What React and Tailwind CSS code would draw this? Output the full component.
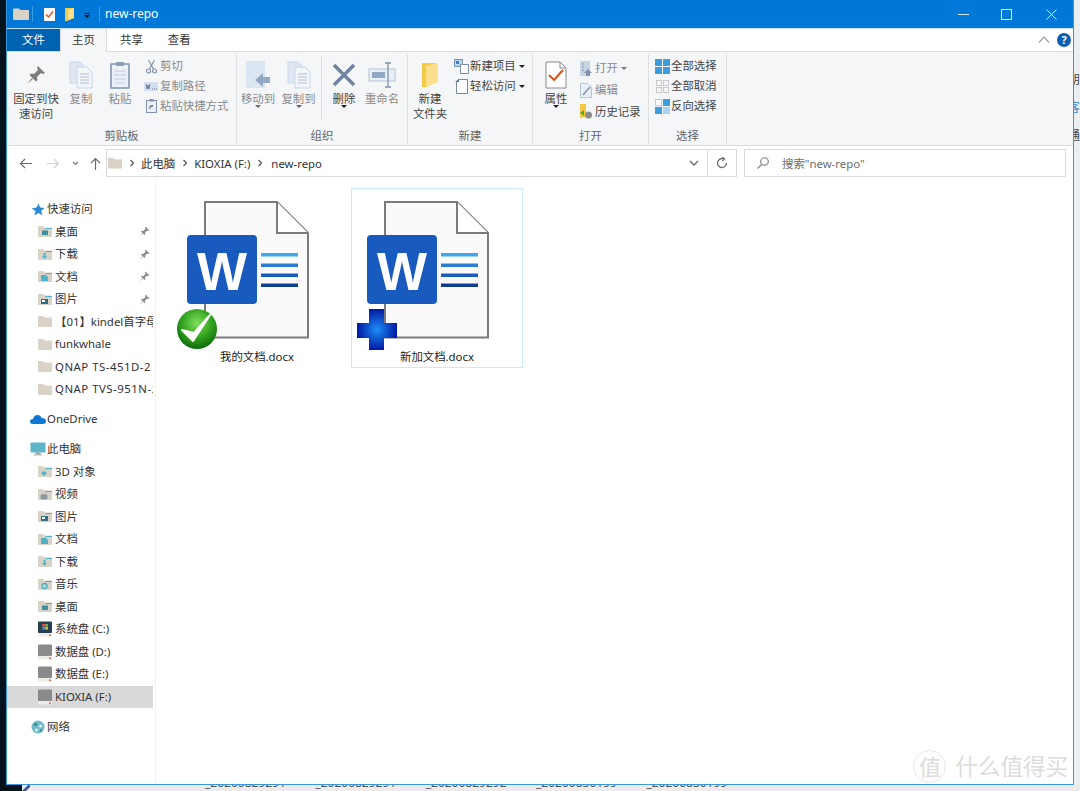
import React from 'react';

const TAN = '#d9d3c7';
const CYAN = '#4fb1c7';

function PinIcon({ size = 11, color = '#8c8c8c' }) {
  return (
    <svg width={size} height={size} viewBox="0 0 20 20">
      <path d="M12 1 L19 8 L17 9 L15 8 L11 12 L11.5 15 L10 16.5 L3.5 10 L5 8.5 L8 9 L12 5 L11 3 Z" fill={color} />
      <path d="M6 13 L1 19 L7 14 Z" fill={color} />
    </svg>
  );
}

function NavFolder({ glyph }) {
  return (
    <svg width="16" height="13" viewBox="0 0 16 13" className="shrink-0">
      <path d="M1 2 Q1 1 2 1 H6 L7.5 2.5 H14 Q15 2.5 15 3.5 V11 Q15 12 14 12 H2 Q1 12 1 11 Z" fill={TAN} />
      {glyph && <path d="M8.5 3 H15 V4 H9.5 L8.5 5 Z" fill={CYAN} />}
      {glyph === 'desk' && <rect x="5" y="5.5" width="6" height="4.5" fill="#3f8f9f" />}
      {glyph === 'down' && <path d="M6.5 5 H8.5 V8 H10 L7.5 11 L5 8 H6.5 Z" fill={CYAN} />}
      {glyph === 'doc' && <path d="M4 5 H9 L11 7 V11 H4 Z" fill={CYAN} />}
      {glyph === 'pic' && <g><rect x="4" y="6" width="7" height="5" fill="#2e6f80" /><rect x="5" y="7" width="3" height="2" fill="#fff" /></g>}
      {glyph === '3d' && <path d="M4 8 L7 6 L10 8 L7 11 Z" fill={CYAN} />}
      {glyph === 'video' && <path d="M4 7 H10 V11 H4 Z M5 6 V7 M7 5.5 V7 M9 6 V7" fill="#8a9aa0" stroke="#8a9aa0" strokeWidth="0.8" />}
      {glyph === 'music' && <circle cx="7.5" cy="8" r="2.5" fill="none" stroke={CYAN} strokeWidth="1.5" />}
    </svg>
  );
}

function Drive({ win }) {
  return (
    <svg width="16" height="16" viewBox="0 0 16 16" className="shrink-0">
      <rect x="1" y="0.5" width="14" height="11.5" rx="1" fill={win ? '#26404f' : '#8a8a8a'} />
      <rect x="1" y="12" width="14" height="3.5" fill="#ebece6" />
      <rect x="12" y="13.5" width="2" height="1.5" fill="#ee6a5f" />
      {win && (
        <g>
          <rect x="5.3" y="3" width="2.6" height="2.6" fill="#e2574c" />
          <rect x="8.3" y="3" width="2.6" height="2.6" fill="#7cbb45" />
          <rect x="5.3" y="6" width="2.6" height="2.6" fill="#3f9be0" />
          <rect x="8.3" y="6" width="2.6" height="2.6" fill="#f4c023" />
        </g>
      )}
    </svg>
  );
}

function NavItem({ icon, label, pinned, selected, wide }) {
  return (
    <div className={`flex items-center h-[22.5px] w-[146px] pl-[30px] whitespace-nowrap overflow-hidden ${selected ? 'bg-[#d9d9d9]' : ''}`}>
      {icon}
      <span className={`ml-[2px] text-[#333] ${wide ? 'tracking-[0.5px]' : ''}`}>{label}</span>
      {pinned && <span className="ml-auto mr-[3px] flex"><PinIcon /></span>}
    </div>
  );
}

function NavRoot({ icon, label }) {
  return (
    <div className="flex items-center h-[22.5px] pl-[22px] whitespace-nowrap">
      <span className="w-[18px] flex justify-center shrink-0">{icon}</span>
      <span className="text-[#333]">{label}</span>
    </div>
  );
}

function Sidebar() {
  return (
    <div className="w-[149px] shrink-0 border-r border-[#f2f2f2] pt-[16px]">
      <NavRoot
        label="快速访问"
        icon={<svg width="14" height="13" viewBox="0 0 14 13"><path d="M7.5 0.5 L9.2 4.6 L13.6 5 L10.2 7.8 L11.3 12.4 L7.5 10 L3.2 12.4 L4.6 8 L0.5 5.4 L5.6 4.6 Z" fill="#2a8ad6" /></svg>}
      />
      <NavItem icon={<NavFolder glyph="desk" />} label="桌面" pinned />
      <NavItem icon={<NavFolder glyph="down" />} label="下载" pinned />
      <NavItem icon={<NavFolder glyph="doc" />} label="文档" pinned />
      <NavItem icon={<NavFolder glyph="pic" />} label="图片" pinned />
      <NavItem icon={<NavFolder />} label="【01】kindel首字母" />
      <NavItem icon={<NavFolder />} label="funkwhale" />
      <NavItem icon={<NavFolder />} label="QNAP TS-451D-2" wide />
      <NavItem icon={<NavFolder />} label="QNAP TVS-951N-2" wide />
      <div className="mt-[7.5px]">
        <NavRoot
          label="OneDrive"
          icon={<svg width="16" height="10" viewBox="0 0 16 10"><path d="M3 10 Q0 10 0 7.5 Q0 5 3 5 Q4 1 7.5 1 Q10.5 1 11.5 4 Q16 4 16 7 Q16 10 13 10 Z" fill="#0f78d4" /></svg>}
        />
      </div>
      <div className="mt-[7.5px]">
        <NavRoot
          label="此电脑"
          icon={<svg width="16" height="14" viewBox="0 0 16 14"><rect x="0.5" y="0.5" width="15" height="10" rx="1" fill="#5cb6c9" /><rect x="5.5" y="10.5" width="5" height="2" fill="#9a9a9a" /><rect x="3.5" y="12.5" width="9" height="1" fill="#b5b5b5" /></svg>}
        />
      </div>
      <NavItem icon={<NavFolder glyph="3d" />} label="3D 对象" />
      <NavItem icon={<NavFolder glyph="video" />} label="视频" />
      <NavItem icon={<NavFolder glyph="pic" />} label="图片" />
      <NavItem icon={<NavFolder glyph="doc" />} label="文档" />
      <NavItem icon={<NavFolder glyph="down" />} label="下载" />
      <NavItem icon={<NavFolder glyph="music" />} label="音乐" />
      <NavItem icon={<NavFolder glyph="desk" />} label="桌面" />
      <NavItem icon={<Drive win />} label="系统盘 (C:)" />
      <NavItem icon={<Drive />} label="数据盘 (D:)" />
      <NavItem icon={<Drive />} label="数据盘 (E:)" />
      <NavItem icon={<Drive />} label="KIOXIA (F:)" selected />
      <div className="mt-[7.5px]">
        <NavRoot
          label="网络"
          icon={<svg width="14" height="14" viewBox="0 0 14 14"><circle cx="7" cy="7" r="6.5" fill="#6fbcc6" /><circle cx="4.5" cy="4.5" r="1.6" fill="#3f7f8a" /><circle cx="9.5" cy="6" r="1.6" fill="#e6efe9" /><circle cx="5.5" cy="10" r="1.6" fill="#e6efe9" /><circle cx="10" cy="10.5" r="1.1" fill="#3f7f8a" /></svg>}
        />
      </div>
    </div>
  );
}

function DocxIcon({ badge }) {
  return (
    <svg width="172" height="160" viewBox="-1 0 172 160" className="block overflow-visible -mt-[1px]">
      <defs>
        <radialGradient id="greenBall" cx="50%" cy="35%" r="65%">
          <stop offset="0%" stopColor="#7fe05a" />
          <stop offset="60%" stopColor="#2f9f1c" />
          <stop offset="100%" stopColor="#0f6a0c" />
        </radialGradient>
        <radialGradient id="blueCross" cx="50%" cy="50%" r="55%">
          <stop offset="0%" stopColor="#1c8cf5" />
          <stop offset="100%" stopColor="#00109c" />
        </radialGradient>
      </defs>
      <path d="M33 14 H105 L136 45 V149.5 H33 Z" fill="#fafafa" stroke="#7b7b7b" strokeWidth="2" />
      <path d="M105 14 V45 H136" fill="#fff" stroke="#7b7b7b" strokeWidth="2" />
      <rect x="15" y="47" width="70" height="69" rx="4" fill="#185abd" />
      <text x="50" y="102" textAnchor="middle" fontFamily="'Liberation Sans', sans-serif" fontWeight="700" fontSize="53" fill="#fff">W</text>
      <rect x="89" y="65" width="37" height="3.5" fill="#41a5ee" />
      <rect x="89" y="75.5" width="37" height="3.5" fill="#2b7cd3" />
      <rect x="89" y="85.5" width="37" height="3.5" fill="#185abd" />
      <rect x="89" y="95.5" width="37" height="3.5" fill="#103f91" />
      {badge === 'check' && (
        <g>
          <circle cx="25" cy="141" r="20" fill="url(#greenBall)" />
          <path d="M10 142 L21 153 L38 127 L22 145 Z" fill="#fff" stroke="#fff" strokeWidth="2" strokeLinejoin="round" />
        </g>
      )}
      {badge === 'plus' && (
        <path d="M17 121 H32 V135 H45 V150 H32 V162 H17 V150 H5 V135 H17 Z" fill="url(#blueCross)" />
      )}
    </svg>
  );
}

function FileItem({ name, badge, selected }) {
  return (
    <div className={`w-[172px] h-[180px] border flex flex-col items-center ${selected ? 'border-[#cce8ff]' : 'border-transparent'}`}>
      <DocxIcon badge={badge} />
      <div className="mt-[1px] leading-[16px] text-[#222]">{name}</div>
    </div>
  );
}

function SmallRow({ icon, label, caret, muted, h = 20 }) {
  return (
    <div className="flex items-center whitespace-nowrap" style={{ height: h }}>
      <span className="w-[16px] flex justify-center shrink-0">{icon}</span>
      <span className={`ml-[1px] ${muted ? 'text-[#8a8a8a]' : 'text-[#444]'}`}>{label}</span>
      {caret && <span className={`ml-[3px] border-x-[3px] border-t-[3px] border-x-transparent ${muted ? 'border-t-[#777]' : 'border-t-[#222]'}`} />}
    </div>
  );
}

function BigBtn({ w, icon, lines, caret, muted }) {
  return (
    <div className="flex flex-col items-center shrink-0" style={{ width: w }}>
      <div className="h-[35px] pt-[3px] flex items-center justify-center">{icon}</div>
      {lines.map((t) => (
        <div key={t} className={`leading-[15px] whitespace-nowrap ${muted ? 'text-[#8a8a8a]' : 'text-[#444]'}`}>{t}</div>
      ))}
      {caret && <span className={`mt-[-1px] border-x-[3px] border-t-[3px] border-x-transparent ${muted ? 'border-t-[#666]' : 'border-t-[#222]'}`} />}
    </div>
  );
}

function RibbonGroup({ w, label, children }) {
  return (
    <div className="relative shrink-0 h-[90px] mt-[2px] border-r border-[#dfe0e2] flex flex-col" style={{ width: w }}>
      <div className="flex flex-1 pt-[2px] min-h-0">{children}</div>
      <div className="text-center leading-[15px] text-[#666] pb-[1px]">{label}</div>
    </div>
  );
}

const DocStack = ({ c = '#c9d6e8' }) => (
  <svg width="24" height="28" viewBox="0 0 24 28">
    <path d="M1 1 H11 L15 5 V22 H1 Z" fill="#dfe7f2" stroke={c} />
    <path d="M8 6 H18 L23 11 V27 H8 Z" fill="#f2f5fa" stroke={c} />
    <path d="M11 13 H20 M11 16 H20 M11 19 H20 M11 22 H20" stroke="#b3c0d3" />
  </svg>
);

function Ribbon() {
  return (
    <div className="flex h-[93px] bg-[#f5f6f7] border-b border-[#dadbdc] box-content">
      <RibbonGroup w={230} label="剪贴板">
        <BigBtn
          w={58}
          lines={['固定到快', '速访问']}
          icon={<PinIcon size={20} color="#7d7d7d" />}
        />
        <BigBtn w={32} muted lines={['复制']} icon={<DocStack />} />
        <BigBtn
          w={46}
          muted
          lines={['粘贴']}
          icon={
            <svg width="20" height="28" viewBox="0 0 20 28">
              <rect x="1" y="3" width="18" height="24" fill="#eaf0f8" stroke="#7f93ad" strokeWidth="1.5" />
              <rect x="6" y="1" width="8" height="4" fill="#8da0b8" />
              <path d="M4 10 H16 M4 14 H16 M4 18 H16 M4 22 H16" stroke="#c3cfdf" />
            </svg>
          }
        />
        <div className="flex flex-col">
          <SmallRow muted label="剪切" icon={<svg width="11" height="15" viewBox="0 0 11 15" fill="none" stroke="#8193ad" strokeWidth="1.2"><path d="M2.5 1 L7.5 10 M8.5 1 L3.5 10" /><circle cx="2.5" cy="12" r="2" /><circle cx="8.5" cy="12" r="2" /></svg>} />
          <SmallRow muted label="复制路径" icon={<svg width="14" height="9" viewBox="0 0 14 9"><rect width="14" height="9" fill="#d5dfed" /><path d="M2 2 L3 7 L4 3 L5 7 L6 2 M8 7 H9 M10 7 H11 M12 7 H13" stroke="#6b7f9b" fill="none" /></svg>} />
          <SmallRow muted label="粘贴快捷方式" icon={<svg width="11" height="14" viewBox="0 0 11 14"><rect x="0.5" y="1.5" width="10" height="12" fill="#eaf0f8" stroke="#8193ad" /><rect x="3.5" y="0" width="4" height="2.5" fill="#8193ad" /><path d="M4 10 V7 H7 M5 8 L7 6" stroke="#50617a" fill="none" /></svg>} />
        </div>
      </RibbonGroup>
      <RibbonGroup w={171} label="组织">
        <div className="w-[85px] flex shrink-0 border-r border-[#dfe0e2] h-[64px]">
          <BigBtn
            w={42}
            muted
            caret
            lines={['移动到']}
            icon={
              <svg width="26" height="28" viewBox="0 0 26 28">
                <path d="M1 0 H20 V27 H1 Z" fill="#dce6f3" />
                <path d="M10 19 L18 12 V16 H25 V22 H18 V26 Z" fill="#93a8c4" />
              </svg>
            }
          />
          <BigBtn w={39} muted caret lines={['复制到']} icon={<DocStack />} />
        </div>
        <BigBtn
          w={44}
          caret
          lines={['删除']}
          icon={
            <svg width="24" height="24" viewBox="0 0 24 24">
              <path d="M2 2 L22 22 M22 2 L2 22" stroke="#6f84a3" strokeWidth="3.5" />
            </svg>
          }
        />
        <BigBtn
          w={32}
          muted
          lines={['重命名']}
          icon={
            <svg width="28" height="26" viewBox="0 0 28 26">
              <rect x="1" y="7" width="26" height="12" fill="#e9eff7" stroke="#b6c4d6" />
              <rect x="4" y="10" width="13" height="6" fill="#93a8c4" />
              <path d="M20 1 V25 M17 1 H23 M17 25 H23" stroke="#8193ad" strokeWidth="1.3" fill="none" />
            </svg>
          }
        />
      </RibbonGroup>
      <RibbonGroup w={125} label="新建">
        <BigBtn
          w={44}
          lines={['新建', '文件夹']}
          icon={
            <svg width="18" height="26" viewBox="0 0 18 26">
              <path d="M1 1 H14 V20 L6 25 H1 Z" fill="#f6c945" />
              <path d="M5 4 L17 1 V20 L5 25 Z" fill="#fbe08b" />
            </svg>
          }
        />
        <div className="flex flex-col ml-[1px]">
          <SmallRow label="新建项目" caret icon={<svg width="15" height="15" viewBox="0 0 15 15"><rect x="0.5" y="0.5" width="8" height="7" fill="#bcd6ef" stroke="#7f93ad" /><rect x="6.5" y="5.5" width="8" height="9" fill="#fff" stroke="#7f93ad" /><rect x="2" y="2" width="3" height="3" fill="#3d7fc0" /></svg>} />
          <SmallRow label="轻松访问" caret icon={<svg width="13" height="15" viewBox="0 0 13 15"><path d="M3.5 0.5 H12.5 V14.5 H1.5 V3 Z" fill="#fff" stroke="#7f8a99" /><path d="M0 3 H4 V0 Z" fill="#3d7fc0" /></svg>} />
        </div>
      </RibbonGroup>
      <RibbonGroup w={116} label="打开">
        <BigBtn
          w={46}
          caret
          lines={['属性']}
          icon={
            <svg width="22" height="28" viewBox="0 0 22 28">
              <path d="M1 1 H15 L21 7 V27 H1 Z" fill="#fff" stroke="#8a8a8a" />
              <path d="M15 1 V7 H21" fill="none" stroke="#8a8a8a" />
              <path d="M4 14 L9 19 L18 9" fill="none" stroke="#e2561f" strokeWidth="2.2" />
            </svg>
          }
        />
        <div className="flex flex-col mt-[1px] -ml-[1px]">
          <SmallRow h={22} muted label="打开" caret icon={<svg width="12" height="15" viewBox="0 0 12 15"><rect width="10" height="15" fill="#c8d4e4" /><path d="M2 3 H4 M2 6 H4 M2 9 H4" stroke="#7f93ad" /><path d="M8 8 L12 12 H10 V15 H6 V12 H4 Z" fill="#7f93ad" /></svg>} />
          <SmallRow h={22} muted label="编辑" icon={<svg width="12" height="15" viewBox="0 0 12 15"><path d="M0.5 0.5 H8 L11.5 4 V14.5 H0.5 Z" fill="#eaf0f8" stroke="#b6c4d6" /><path d="M3 12 L10 4" stroke="#8193ad" strokeWidth="1.5" /></svg>} />
          <SmallRow h={21} label="历史记录" icon={<svg width="14" height="15" viewBox="0 0 14 15"><path d="M1 0 H7 V13 L1 14 Z" fill="#f6c945" /><circle cx="9.5" cy="11" r="3.5" fill="#8a8a8a" /><path d="M1 9 L5 6 V12 Z" fill="#4aa72f" /></svg>} />
        </div>
      </RibbonGroup>
      <RibbonGroup w={78} label="选择">
        <div className="flex flex-col ml-[5px]">
          <SmallRow label="全部选择" icon={<svg width="15" height="15" viewBox="0 0 15 15"><rect width="15" height="15" fill="#3d9be0" /><path d="M7.5 0 V15 M0 7.5 H15" stroke="#fff" /></svg>} />
          <SmallRow label="全部取消" icon={<svg width="13" height="13" viewBox="0 0 13 13" fill="none" stroke="#c9c9c9"><rect x="0.5" y="0.5" width="5" height="5" /><rect x="7.5" y="0.5" width="5" height="5" /><rect x="0.5" y="7.5" width="5" height="5" /><rect x="7.5" y="7.5" width="5" height="5" /></svg>} />
          <SmallRow label="反向选择" icon={<svg width="15" height="15" viewBox="0 0 15 15"><rect x="8" width="7" height="7" fill="#3d9be0" /><rect y="8" width="7" height="7" fill="#3d9be0" /><rect x="8" y="8" width="7" height="7" fill="#a8d4f2" /><rect x="0.5" y="0.5" width="6" height="6" fill="#fff" stroke="#c9c9c9" /></svg>} />
        </div>
      </RibbonGroup>
    </div>
  );
}

const Crumb = () => (
  <svg width="6" height="8" viewBox="0 0 6 8" className="mx-[6.5px] shrink-0" fill="none" stroke="#555" strokeWidth="1.2"><path d="M1.5 1 L4.5 4 L1.5 7" /></svg>
);

function AddressBar() {
  return (
    <div className="h-[36px] flex items-start pt-[3px] bg-white shrink-0">
      <div className="w-[99px] h-[28px] flex items-center shrink-0">
        <svg width="13" height="11" viewBox="0 0 13 11" className="ml-[12px]" fill="none" stroke="#6d6d6d" strokeWidth="1.2"><path d="M6 1 L1.5 5.5 L6 10 M1.5 5.5 H13" /></svg>
        <svg width="13" height="11" viewBox="0 0 13 11" className="ml-[15px]" fill="none" stroke="#d0d0d0" strokeWidth="1.2"><path d="M7 1 L11.5 5.5 L7 10 M11.5 5.5 H0" /></svg>
        <svg width="7" height="5" viewBox="0 0 7 5" className="ml-[12px]" fill="none" stroke="#777" strokeWidth="1.2"><path d="M1 1 L3.5 3.5 L6 1" /></svg>
        <svg width="11" height="13" viewBox="0 0 11 13" className="ml-[11px]" fill="none" stroke="#6d6d6d" strokeWidth="1.2"><path d="M1 6 L5.5 1.5 L10 6 M5.5 1.5 V13" /></svg>
      </div>
      <div className="w-[631px] h-[28px] border border-[#d9d9d9] flex items-center shrink-0 text-[#333]">
        <svg width="14" height="12" viewBox="0 0 15 12" className="ml-[1px]"><path d="M0 1.5 Q0 0.5 1 0.5 H5.5 L7 2 H14 Q15 2 15 3 V11 Q15 12 14 12 H1 Q0 12 0 11 Z" fill={TAN} /></svg>
        <Crumb />
        <span className="mt-[1px]">此电脑</span>
        <Crumb />
        <span className="mt-[1px]">KIOXIA (F:)</span>
        <Crumb />
        <span className="mt-[1px] ml-[2px]">new-repo</span>
        <svg width="10" height="6" viewBox="0 0 10 6" className="ml-auto mr-[8px]" fill="none" stroke="#666" strokeWidth="1.3"><path d="M1 1 L5 5 L9 1" /></svg>
        <div className="w-[29px] h-full border-l border-[#d9d9d9] flex items-center justify-center">
          <svg width="12" height="12" viewBox="0 0 12 12" fill="none" stroke="#6d6d6d" strokeWidth="1.3"><path d="M10.5 6 A4.5 4.5 0 1 1 7.5 1.8" /><path d="M6.5 0 L8.5 2 L6.5 4" /></svg>
        </div>
      </div>
      <div className="w-[322px] h-[28px] ml-[7px] border border-[#d9d9d9] flex items-center shrink-0 text-[#6d6d6d]">
        <svg width="12" height="12" viewBox="0 0 12 12" className="ml-[12px] mr-[13px]" fill="none" stroke="#777" strokeWidth="1.1"><circle cx="7.5" cy="4.5" r="3.8" /><path d="M4.7 7.3 L0.5 11.5" /></svg>
        <span className="mt-[1px]">搜索"new-repo"</span>
      </div>
    </div>
  );
}

function TitleBar() {
  return (
    <div className="h-[28px] bg-[#0078d7] flex items-center shrink-0 text-white text-[12px]">
      <svg width="16" height="12" viewBox="0 0 16 12" className="ml-[6px]"><path d="M0 1.5 Q0 0.5 1 0.5 H6 L7.5 2 H15 Q16 2 16 3 V11 Q16 12 15 12 H1 Q0 12 0 11 Z" fill={TAN} /></svg>
      <span className="w-px h-[16px] bg-[#3b9ae4] ml-[3px]" />
      <svg width="12" height="13" viewBox="0 0 12 13" className="ml-[11px]"><rect width="11" height="13" fill="#fff" /><path d="M2 6.5 L4.5 9 L9 3.5" stroke="#e2561f" strokeWidth="1.5" fill="none" /></svg>
      <svg width="10" height="13" viewBox="0 0 10 13" className="ml-[9px]"><path d="M0 0 H9 V10 L2 13 H0 Z" fill="#f6c945" /><path d="M3 2 L9 0 V10 L3 12 Z" fill="#fbe08b" /></svg>
      <span className="ml-[9px] mt-[3px] flex flex-col items-center gap-[1px]">
        <span className="w-[5px] h-px bg-[#111]" />
        <span className="border-x-[3px] border-t-[3px] border-x-transparent border-t-[#111]" />
      </span>
      <span className="w-px h-[16px] bg-[#3b9ae4] ml-[9px]" />
      <span className="ml-[5px]">new-repo</span>
      <svg width="11" height="1" viewBox="0 0 11 1" className="ml-auto"><rect width="11" height="1" fill="#d7eaf8" /></svg>
      <svg width="11" height="11" viewBox="0 0 11 11" className="ml-[32px]" fill="none" stroke="#e6f2fb"><rect x="0.5" y="0.5" width="10" height="10" /></svg>
      <svg width="11" height="11" viewBox="0 0 11 11" className="ml-[34px] mr-[16px]" fill="none" stroke="#e6f2fb"><path d="M0.5 0.5 L10.5 10.5 M10.5 0.5 L0.5 10.5" /></svg>
    </div>
  );
}

function Tabs() {
  return (
    <div className="h-[24px] bg-white border-b border-[#dadbdc] flex items-start shrink-0 border-t border-t-[#c6e0f5]">
      <div className="w-[53px] h-[22px] bg-[#0063b1] text-white text-center leading-[21px]">文件</div>
      <div className="w-[47px] h-[23px] bg-[#f5f6f7] border-x border-[#dadbdc] text-center leading-[21px] text-[#333]">主页</div>
      <div className="ml-[13px] leading-[21px] text-[#333]">共享</div>
      <div className="ml-[25px] leading-[21px] text-[#333]">查看</div>
      <svg width="12" height="7" viewBox="0 0 12 7" className="ml-auto mt-[7px]" fill="none" stroke="#a0a0a0" strokeWidth="1.2"><path d="M1 6.5 L6 1 L11 6.5" /></svg>
      <div className="w-[14px] h-[14px] rounded-full bg-[#0a5fb4] text-white text-[11px] font-bold leading-[14px] text-center ml-[7px] mr-[2px] mt-[4px]">?</div>
    </div>
  );
}

export default function App() {
  return (
    <div className="w-[1080px] h-[791px] overflow-hidden flex flex-col bg-[#04141f] font-['Noto_Sans','Noto_Sans_CJK_SC',sans-serif] text-[11.4px] leading-[16px]">
      <div className="flex h-[785px] shrink-0">
        <div className="w-[6px] shrink-0" />
        <div className="w-[1068px] shrink-0 h-full border-x border-b border-[#3a96dd] bg-white flex flex-col relative">
          <TitleBar />
          <Tabs />
          <Ribbon />
          <AddressBar />
          <div className="flex flex-1 min-h-0">
            <Sidebar />
            <div className="flex-1 flex items-start gap-[8px] pl-[15px] pt-[6px]">
              <FileItem name="我的文档.docx" badge="check" />
              <FileItem name="新加文档.docx" badge="plus" selected />
            </div>
          </div>
          {/* 水印 */}
          <div className="absolute right-[5px] bottom-[1px] flex items-center text-[#dcdcdc]">
            <div className="w-[33px] h-[33px] rounded-full border border-[#e8e8e8] text-[22px] leading-[30px] text-center">值</div>
            <div className="ml-[9px] text-[22.5px] leading-[28px] whitespace-nowrap">什么值得买</div>
          </div>
        </div>
        <div className="flex-1 bg-[#eceff1] overflow-hidden text-[#444] text-[12px] pt-[72px] flex flex-col items-start">
          <span className="-ml-[6px]">朋</span>
          <span className="-ml-[6px] mt-[12px] text-[#3a7fc4]">客</span>
          <span className="-ml-[6px] mt-[12px]">通</span>
        </div>
      </div>
      <div className="h-[6px] flex bg-[#ececec] overflow-hidden text-[#555] text-[12px]">
        <div className="w-[22px] bg-[#04141f] shrink-0" />
        <svg width="8" height="6" viewBox="0 0 8 6" className="shrink-0"><path d="M0 6 L6 0 H8 V2 L4 6 Z" fill="#3c5a8f" /></svg>
        <div className="flex gap-[29.5px] pl-[175px] -mt-[10px] whitespace-nowrap">
          <span>_20200829291</span>
          <span>_20200829291</span>
          <span>_20200829292</span>
          <span>_20200830199</span>
          <span>_20200830199</span>
        </div>
      </div>
    </div>
  );
}
